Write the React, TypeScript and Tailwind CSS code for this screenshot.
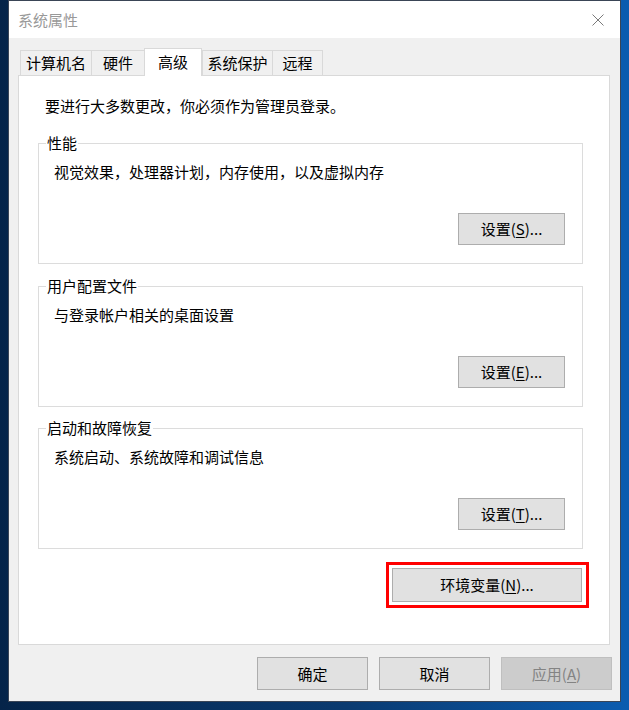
import React from "react";

const Btn = ({
  children,
  className = "",
  disabled = false,
}: {
  children: React.ReactNode;
  className?: string;
  disabled?: boolean;
}) => (
  <button
    className={`flex items-center justify-center border leading-5 ${
      disabled
        ? "border-[#bfbfbf] bg-[#cccccc] text-[#838383]"
        : "border-[#adadad] bg-[#e1e1e1] text-black"
    } ${className}`}
  >
    {children}
  </button>
);

const Group = ({
  title,
  desc,
  label,
  hotkey,
  className = "",
}: {
  title: string;
  desc: string;
  label: string;
  hotkey: string;
  className?: string;
}) => (
  <fieldset className={`ml-[19px] mr-[26px] border border-[#dcdcdc] ${className}`}>
    <legend className="ml-[7px] px-[1px] leading-5">{title}</legend>
    <div className="flex flex-col pb-[18px] pr-[17px]">
      <p className="mt-[9px] pl-[15px] leading-5">{desc}</p>
      <div className="mt-[31px] flex justify-end">
        <Btn className="h-[32px] w-[107px]">
          {label}(<span className="underline underline-offset-2">{hotkey}</span>)...
        </Btn>
      </div>
    </div>
  </fieldset>
);

const tabs = [
  { name: "计算机名", w: "w-[71px]" },
  { name: "硬件", w: "w-[53px]" },
  { name: "高级", w: "w-[58px]", active: true },
  { name: "系统保护", w: "w-[70px]" },
  { name: "远程", w: "w-[51px]" },
];

export default function App() {
  return (
    <div className="h-[710px] w-[629px] overflow-hidden bg-[linear-gradient(90deg,#052449_0%,#0a3a70_55%,#0b5cb0_100%)] font-['Noto_Sans_CJK_SC',sans-serif] text-[15px] leading-5 text-black">
      <div className="ml-[8px] flex h-[702px] w-[613px] flex-col border border-[#3a4556] bg-[#f0f0f0]">
        {/* Title bar */}
        <div className="flex h-[37px] shrink-0 items-center justify-between bg-white pl-[9px] pr-[16px]">
          <span className="text-[#999999]">系统属性</span>
          <svg width="12" height="12" viewBox="0 0 12 12" className="text-[#7a7a7a]">
            <path d="M0.5 0.5 L11.5 11.5 M11.5 0.5 L0.5 11.5" stroke="currentColor" strokeWidth="1" fill="none" />
          </svg>
        </div>

        {/* Body */}
        <div className="flex flex-col pl-[9px] pr-[10px] pt-[10px]">
          {/* Tabs */}
          <div className="flex items-end pl-[2px]">
            {tabs.map((t, i) =>
              t.active ? (
                <div
                  key={t.name}
                  className={`${t.w} relative z-10 -mb-px flex h-[28px] items-center justify-center border-x border-t border-[#d9d9d9] bg-white pb-[2px]`}
                >
                  {t.name}
                </div>
              ) : (
                <div
                  key={t.name}
                  className={`${t.w} flex h-[25px] items-center justify-center border-l border-t border-[#d9d9d9] bg-[#f0f0f0] ${
                    i === tabs.length - 1 ? "border-r" : ""
                  }`}
                >
                  {t.name}
                </div>
              )
            )}
          </div>

          {/* Panel */}
          <div className="flex h-[570px] flex-col border border-[#d9d9d9] bg-white pt-[20px]">
            <p className="ml-[26px] leading-5">要进行大多数更改，你必须作为管理员登录。</p>

            <Group
              className="mt-[17px]"
              title="性能"
              desc="视觉效果，处理器计划，内存使用，以及虚拟内存"
              label="设置"
              hotkey="S"
            />
            <Group
              className="mt-[12px]"
              title="用户配置文件"
              desc="与登录帐户相关的桌面设置"
              label="设置"
              hotkey="E"
            />
            <Group
              className="mt-[11px]"
              title="启动和故障恢复"
              desc="系统启动、系统故障和调试信息"
              label="设置"
              hotkey="T"
            />

            <div className="mr-[20px] mt-[13px] flex self-end border-[3px] border-[#ff0000] pb-[3px] pl-[3px] pr-[4px] pt-[3px]">
              <Btn className="h-[34px] w-[190px]">
                环境变量(<span className="underline underline-offset-2">N</span>)...
              </Btn>
            </div>
          </div>

          {/* Dialog buttons */}
          <div className="-mr-[2px] mt-[12px] flex justify-end gap-[11px]">
            <Btn className="h-[33px] w-[111px]">确定</Btn>
            <Btn className="h-[33px] w-[111px]">取消</Btn>
            <Btn className="h-[33px] w-[111px]" disabled>
              应用(<span className="underline underline-offset-2">A</span>)
            </Btn>
          </div>
        </div>
      </div>
    </div>
  );
}
